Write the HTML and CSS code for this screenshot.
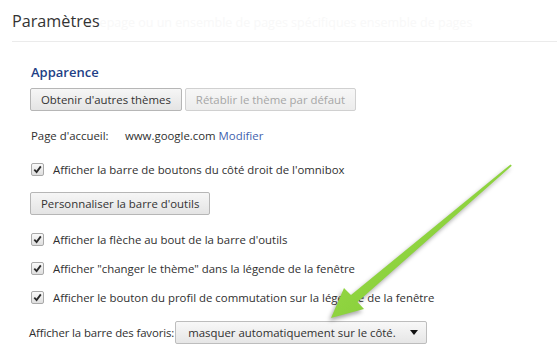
FILE: index.html
```html
<!DOCTYPE html>
<html lang="fr">
<head>
    <meta charset="UTF-8">
    <title>Paramètres</title>
    <link rel="stylesheet" href="styles.css">
</head>
<body>
    <header class="top">
        <h1>Paramètres</h1>
        <span class="ghost">epage ou un ensemble de pages spécifiques ensemble de pages</span>
    </header>

    <section class="section">
        <h2>Apparence</h2>
        <div class="btn-row">
            <button class="btn">Obtenir d'autres thèmes</button>
            <button class="btn" disabled>Rétablir le thème par défaut</button>
        </div>

        <div class="home">
            <span class="home-label">Page d'accueil:</span>
            <span>www.google.com</span>
            <a class="link" href="#">Modifier</a>
        </div>

        <label class="check first">
            <span class="box"><svg viewBox="0 0 12 12"><path d="M2.5 6.2 L5 8.8 L9.6 2.6" /></svg></span>
            Afficher la barre de boutons du côté droit de l'omnibox
        </label>

        <button class="btn tool-btn">Personnaliser la barre d'outils</button>

        <label class="check group">
            <span class="box"><svg viewBox="0 0 12 12"><path d="M2.5 6.2 L5 8.8 L9.6 2.6" /></svg></span>
            Afficher la flèche au bout de la barre d'outils
        </label>
        <label class="check">
            <span class="box"><svg viewBox="0 0 12 12"><path d="M2.5 6.2 L5 8.8 L9.6 2.6" /></svg></span>
            Afficher "changer le thème" dans la légende de la fenêtre
        </label>
        <label class="check">
            <span class="box"><svg viewBox="0 0 12 12"><path d="M2.5 6.2 L5 8.8 L9.6 2.6" /></svg></span>
            Afficher le bouton du profil de commutation sur la légende de la fenêtre
        </label>

        <div class="fav-row">
            <span class="fav-label">Afficher la barre des favoris:</span>
            <div class="select">
                <span>masquer automatiquement sur le côté.</span>
                <span class="caret"></span>
            </div>
        </div>
    </section>

    <!-- arrow drawn over the page -->
    <svg class="arrow" width="557" height="364" viewBox="0 0 557 364">
        <defs>
            <linearGradient id="green" x1="0" y1="0" x2="1" y2="1">
                <stop offset="0" stop-color="#a4e052"/>
                <stop offset="1" stop-color="#78c62c"/>
            </linearGradient>
        </defs>
        <polygon points="331,318 344,288 351,295 510.5,164.5 511.8,165.8 357.5,302 364,309" fill="url(#green)"/>
    </svg>
</body>
</html>
```

FILE: styles.css
```css
body {
    margin: 0;
    padding: 0;
    background: #fff;
    font-family: "Open Sans", "Noto Sans", sans-serif;
    font-size: 11.4px;
    color: #303030;
}

.top {
    display: flex;
    align-items: baseline;
    height: 42px;
    margin-left: 12px;
    border-bottom: 1px solid #ebebeb;
    box-sizing: border-box;
    padding-top: 9px;
    overflow: hidden;
}

.top h1 {
    margin: 0;
    font-size: 16.2px;
    font-weight: normal;
    color: #333;
    line-height: 24px;
}

.ghost {
    font-size: 12.5px;
    color: #f8f8f8;
    white-space: nowrap;
}

.section {
    padding-left: 30px;
}

.section h2 {
    margin: 21px 0 0 1px;
    font-size: 13px;
    font-weight: 600;
    line-height: 18px;
    color: #223f86;
}

.btn-row {
    display: flex;
    gap: 3px;
    margin-top: 7px;
}

.btn {
    display: block;
    height: 23px;
    padding: 0 10px;
    font-family: inherit;
    font-size: 11.4px;
    color: #333;
    background: linear-gradient(#f6f6f6, #e4e4e4);
    border: 1px solid #b6b6b6;
    border-radius: 2px;
}

.btn:disabled {
    color: #a6a6a6;
    background: linear-gradient(#f7f7f7, #ececec);
    border-color: #d0d0d0;
}

.home {
    margin-top: 16px;
    line-height: 18px;
    padding-left: 1px;
}

.home-label {
    display: inline-block;
    width: 91px;
}

.link {
    color: #3f5fad;
    text-decoration: none;
}

.check {
    display: flex;
    align-items: center;
    height: 18px;
    margin-top: 11px;
    padding-left: 1px;
}

.check.first {
    margin-top: 15px;
}

.check.group {
    margin-top: 15px;
}

.box {
    width: 11px;
    height: 11px;
    margin-right: 9px;
    border: 1px solid #a9a9a9;
    border-radius: 2px;
    background: linear-gradient(#fafafa, #dedede);
    display: flex;
}

.box svg {
    width: 11px;
    height: 11px;
}

.box path {
    fill: none;
    stroke: #2a2a2a;
    stroke-width: 2;
}

.tool-btn {
    margin-top: 14px;
}

.fav-row {
    display: flex;
    align-items: center;
    margin-top: 15px;
}

.fav-label {
    margin-left: -1px;
    margin-right: 1px;
    letter-spacing: -0.12px;
    white-space: nowrap;
}

.select {
    display: flex;
    flex-shrink: 0;
    align-items: center;
    justify-content: space-between;
    width: 252px;
    height: 23px;
    box-sizing: border-box;
    padding: 0 6px 0 12px;
    background: linear-gradient(#f8f8f8, #e6e6e6);
    border: 1px solid #bdbdbd;
    border-radius: 2px;
}

.caret {
    width: 0;
    height: 0;
    border-left: 4px solid transparent;
    border-right: 4px solid transparent;
    border-top: 5px solid #111;
    margin-right: 2px;
}

.arrow {
    position: absolute;
    left: 0;
    top: 0;
    pointer-events: none;
    filter: drop-shadow(-2px 3px 2px rgba(0, 0, 0, 0.35));
}
```
